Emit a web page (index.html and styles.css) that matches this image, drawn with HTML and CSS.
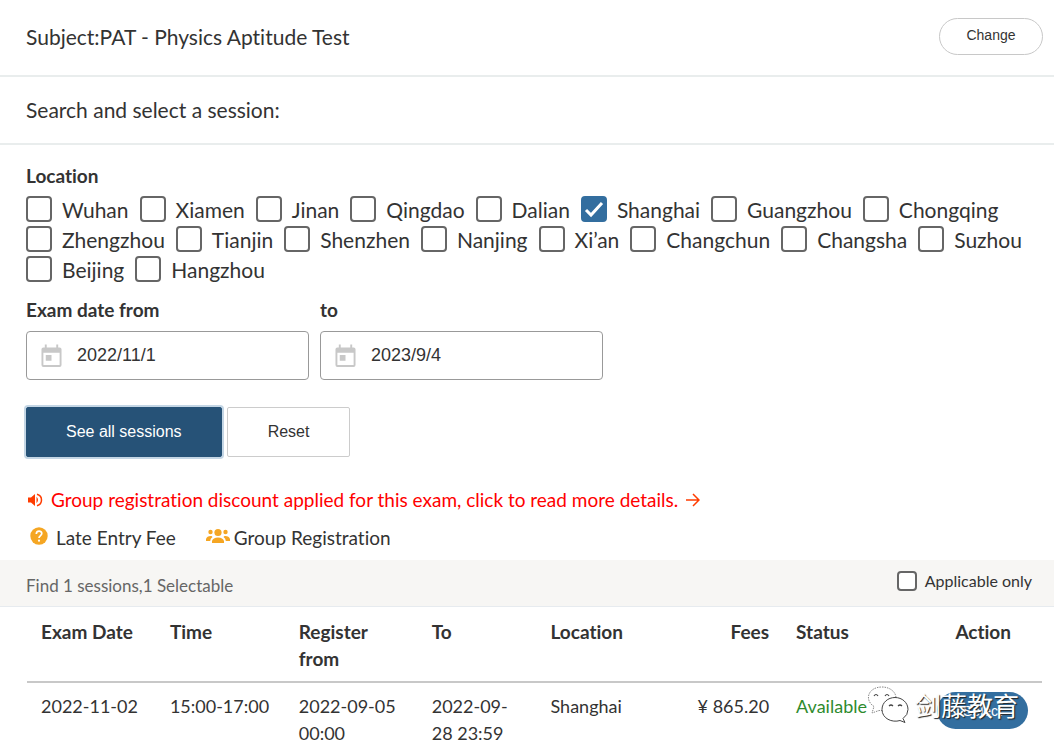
FILE: index.html
```html
<!DOCTYPE html>
<html lang="en">
<head>
<meta charset="utf-8">
<title>PAT - Physics Aptitude Test</title>
<link rel="stylesheet" href="styles.css">
</head>
<body>
<header class="bar subject">
  <h1 class="heading">Subject:PAT - Physics Aptitude Test</h1>
  <button class="pill" type="button">Change</button>
</header>
<div class="bar">
  <h2 class="heading">Search and select a session:</h2>
</div>
<form class="search">
  <fieldset class="locations">
    <legend class="label">Location</legend>
    <div class="options">
      <label class="option"><input class="check" type="checkbox">Wuhan</label>
      <label class="option"><input class="check" type="checkbox">Xiamen</label>
      <label class="option"><input class="check" type="checkbox">Jinan</label>
      <label class="option"><input class="check" type="checkbox">Qingdao</label>
      <label class="option"><input class="check" type="checkbox">Dalian</label>
      <label class="option"><input class="check" type="checkbox" checked>Shanghai</label>
      <label class="option"><input class="check" type="checkbox">Guangzhou</label>
      <label class="option"><input class="check" type="checkbox">Chongqing</label>
      <label class="option"><input class="check" type="checkbox">Zhengzhou</label>
      <label class="option"><input class="check" type="checkbox">Tianjin</label>
      <label class="option"><input class="check" type="checkbox">Shenzhen</label>
      <label class="option"><input class="check" type="checkbox">Nanjing</label>
      <label class="option"><input class="check" type="checkbox">Xi’an</label>
      <label class="option"><input class="check" type="checkbox">Changchun</label>
      <label class="option"><input class="check" type="checkbox">Changsha</label>
      <label class="option"><input class="check" type="checkbox">Suzhou</label>
      <label class="option"><input class="check" type="checkbox">Beijing</label>
      <label class="option"><input class="check" type="checkbox">Hangzhou</label>
    </div>
  </fieldset>
  <div class="dates">
    <div class="date">
      <label class="label" for="from">Exam date from</label>
      <div class="field">
        <svg class="calendar" viewBox="0 0 22 24"><path fill="#c8c8c8" fill-rule="evenodd" d="M4 0h2v3h10V0h2v3h1.500q2 0 2 2v16.500q0 2-2 2h-17q-2 0-2-2V5q0-2 2-2H4zM2.500 8.500v13h17v-13zM5 11h6v6H5z"/></svg>
        <input class="date-input" id="from" type="text" value="2022/11/1">
      </div>
    </div>
    <div class="date">
      <label class="label" for="to">to</label>
      <div class="field">
        <svg class="calendar" viewBox="0 0 22 24"><path fill="#c8c8c8" fill-rule="evenodd" d="M4 0h2v3h10V0h2v3h1.500q2 0 2 2v16.500q0 2-2 2h-17q-2 0-2-2V5q0-2 2-2H4zM2.500 8.500v13h17v-13zM5 11h6v6H5z"/></svg>
        <input class="date-input" id="to" type="text" value="2023/9/4">
      </div>
    </div>
  </div>
  <div class="actions">
    <button class="button primary" type="button">See all sessions</button>
    <button class="button" type="reset">Reset</button>
  </div>
</form>
<a class="notice" href="#">
  <svg class="sound" viewBox="0 0 15 14"><path fill="#ff3c00" d="M0 4.500h3L7 1v12L3 9.500H0z"/><path fill="#ff3c00" d="M8.500 3.800q3 3.200 0 6.400z"/><path fill="none" stroke="#ff3c00" stroke-width="1.500" d="M9 1.300c6 1.500 6 9.900 0 11.400"/></svg>
  <span>Group registration discount applied for this exam, click to read more details.</span>
  <svg class="arrow" viewBox="0 0 14 14"><path fill="none" stroke="#ff3c00" stroke-width="1.500" d="M0 7h13M7 1l6 6-6 6"/></svg>
</a>
<div class="legend">
  <span class="key"><svg class="question" viewBox="0 0 18 18"><circle cx="9" cy="9" r="8.700" fill="#f5a623"/><path fill="none" stroke="#fff" stroke-width="1.700" d="M6.300 7c0-3.800 5.600-3.700 5.500-.4 0 2-2.800 2-2.800 4.500"/><circle cx="9" cy="13.700" r="1.100" fill="#fff"/></svg>Late Entry Fee</span>
  <span class="key"><svg class="people" viewBox="0 0 24 16"><g fill="#f5a623"><circle cx="12" cy="4.500" r="3.600"/><circle cx="4.500" cy="4" r="2.200"/><circle cx="19.500" cy="4" r="2.200"/><path d="M6 15v-2q1-3.500 6-3.500t6 3.500v2zM0 13v-2q1-3.300 5.500-3l1 1Q4.300 10.500 4.200 13zM24 13v-2q-1-3.300-5.500-3l-1 1q2.200 1.500 2.300 4z"/></g></svg>Group Registration</span>
</div>
<div class="summary">
  <span class="count">Find 1 sessions,1 Selectable</span>
  <label class="only"><input class="check small" type="checkbox">Applicable only</label>
</div>
<main class="results">
  <table class="sessions">
    <colgroup><col class="c-date"><col class="c-date"><col class="c-reg"><col class="c-to"><col class="c-place"><col class="c-fee"><col class="c-status"><col></colgroup>
    <thead>
      <tr><th>Exam Date</th><th>Time</th><th>Register from</th><th>To</th><th>Location</th><th class="right">Fees</th><th>Status</th><th class="right last">Action</th></tr>
    </thead>
    <tbody>
      <tr><td>2022-11-02</td><td>15:00-17:00</td><td>2022-09-05 00:00</td><td>2022-09-28 23:59</td><td>Shanghai</td><td class="right">¥ 865.20</td><td class="available">Available</td><td class="action">
        <button class="select" type="button">Select</button>
        <div class="watermark">
          <svg class="wechat" viewBox="0 0 42 38"><g fill="#fff" stroke="#444"><path stroke-dasharray="1.500 1" stroke="#888" d="M7 20.500C-3 14 1 1 15 1c8 0 14 5 14 11 0 8-7 13-17 12.500L5 27z"/><path d="M36 32.500q5-3.500 5-9c0-7-6-12-13-12s-13 5-13 12c0 9 10 13.500 18 11l5 2z"/></g><g fill="none" stroke="#444" stroke-width="1.200"><path d="M7 10q2-3 4 0M18 10q2-3 4 0M22 20q2-2 4 0M31 20q2-2 4 0"/></g></svg>
          <span class="mark-name" lang="zh">剑藤教育</span>
        </div>
      </td></tr>
    </tbody>
  </table>
</main>
</body>
</html>
```

FILE: styles.css
```css
* { box-sizing: border-box; }
body {
  margin: 0;
  background: #fff;
  color: #333;
  font-family: Lato, "Noto Sans", sans-serif;
  font-size: 18px;
  font-variant-ligatures: none;
}
.bar {
  display: flex;
  align-items: center;
  justify-content: space-between;
  padding: 19px 11px 19px 26px;
  border-bottom: 2px solid #e9eded;
}
.subject { padding-top: 18px; padding-bottom: 20px; }
.heading { margin: 0; font-size: 21px; line-height: 28px; font-weight: 400; }
.pill {
  width: 104px;
  height: 37px;
  padding: 0 0 3px;
  border: 1px solid #c8c8c8;
  border-radius: 19px;
  background: #fff;
  color: #333;
  font: 14px "Liberation Sans", Arial, sans-serif;
}
.search { padding: 19px 12px 0 26px; }
.locations { margin: 0; padding: 0; border: 0; min-width: 0; }
.label { display: block; padding: 0; font-size: 19px; line-height: 24px; font-weight: 700; }
.options { display: flex; flex-wrap: wrap; column-gap: 11px; padding-top: 7px; }
.option { display: flex; align-items: center; gap: 10px; font-size: 21px; line-height: 30px; }
.check {
  appearance: none;
  flex: none;
  width: 26px;
  height: 26px;
  margin: 0;
  border: 2px solid #666;
  border-radius: 4px;
  background: #fff;
}
.option .check { margin-bottom: 2px; }
.check:checked {
  border-color: #336e9f;
  background: #336e9f url("data:image/svg+xml,%3Csvg xmlns='http://www.w3.org/2000/svg' viewBox='0 0 22 22'%3E%3Cpath fill='none' stroke='white' stroke-width='3' d='M3 12l5 5L19 5'/%3E%3C/svg%3E") center / 22px no-repeat;
}
.check.small { width: 20px; height: 20px; }
.dates { display: flex; gap: 11px; margin-top: 13px; }
.date { flex: 0 1 283px; min-width: 0; }
.field {
  display: flex;
  align-items: center;
  gap: 15px;
  height: 49px;
  margin-top: 9px;
  padding: 0 14px;
  border: 1px solid #999;
  border-radius: 4px;
}
.calendar { flex: none; width: 21px; height: 24px; }
.date-input {
  flex: 1;
  min-width: 0;
  padding: 0;
  border: 0;
  background: none;
  color: #333;
  font: 18px "Liberation Sans", Arial, sans-serif;
}
.actions { display: flex; gap: 5px; margin-top: 27px; }
.button {
  height: 50px;
  padding: 0 40px;
  border: 1px solid #ccc;
  border-radius: 2px;
  background: #fff;
  color: #333;
  font: 16px "Liberation Sans", Arial, sans-serif;
}
.primary { padding: 0 39px; border-color: #265277; background: #265277; color: #fff; box-shadow: 0 0 0 2px #c4d6e5; }
.notice {
  display: flex;
  align-items: center;
  gap: 8px;
  margin: 29px 0 0 28px;
  color: #f00;
  font-size: 19px;
  line-height: 28px;
  text-decoration: none;
}
.sound { width: 15px; height: 14px; }
.arrow { width: 14px; height: 14px; }
.legend { display: flex; gap: 30px; padding: 10px 30px 8px; font-size: 19px; line-height: 28px; }
.key { display: flex; align-items: center; gap: 8px; }
.key + .key { gap: 4px; }
.question { width: 18px; height: 18px; margin-bottom: 4px; }
.people { width: 24px; height: 16px; margin-bottom: 4px; }
.summary {
  display: flex;
  justify-content: space-between;
  height: 47px;
  padding: 9px 22px 0 26px;
  border-bottom: 1px solid #e7ebef;
  background: #f7f6f4;
  font-size: 17px;
}
.count { padding-top: 5px; color: #666; line-height: 24px; }
.only { display: flex; align-items: center; align-self: flex-start; gap: 8px; font-size: 16px; line-height: 24px; }
.results { padding: 0 12px 0 27px; }
.sessions { width: 100%; border-collapse: collapse; table-layout: fixed; line-height: 27px; }
.c-date { width: 12.7%; }
.c-reg { width: 13.1%; }
.c-to { width: 11.7%; }
.c-place { width: 12.4%; }
.c-fee { width: 11.8%; }
.c-status { width: 10.8%; }
th, td { padding: 10px 13px 9px 14px; text-align: left; vertical-align: top; font-size: 18px; }
th { padding-top: 11px; border-bottom: 2px solid #c8c8c8; font-size: 19px; }
.right { text-align: right; }
.last { padding-right: 31px; }
.available { color: #2e8b2e; }
.action { position: relative; padding: 9px 14px 0 0; text-align: right; }
.select {
  width: 91px;
  height: 37px;
  border: 0;
  border-radius: 19px;
  background: #336e9f;
  color: #fff;
  font: 14px "Liberation Sans", Arial, sans-serif;
}
.watermark { position: absolute; top: 3px; right: 23px; display: flex; align-items: center; gap: 6px; pointer-events: none; }
.wechat { width: 42px; height: 38px; }
.mark-name {
  color: #fff;
  font: 26px/38px "Noto Sans CJK SC", sans-serif;
  text-shadow: 1px 1px 1px #222;
  white-space: nowrap;
}
```
